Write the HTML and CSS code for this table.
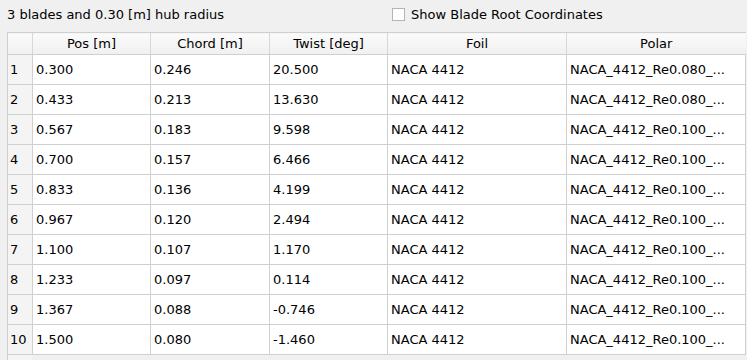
FILE: index.html
```html
<!DOCTYPE html>
<html>
<head>
<meta charset="utf-8">
<link rel="stylesheet" href="styles.css">
</head>
<body>
<div class="top">
  <span class="title">3 blades and 0.30 [m] hub radius</span>
  <label class="check"><span class="box"></span><span>Show Blade Root Coordinates</span></label>
</div>
<div class="table-wrap">
<table class="grid">
  <colgroup>
    <col class="c-rh"><col class="c-num"><col class="c-chord"><col class="c-num"><col class="c-wide"><col class="c-wide">
  </colgroup>
  <thead>
    <tr><th class="corner"></th><th>Pos [m]</th><th>Chord [m]</th><th>Twist [deg]</th><th>Foil</th><th>Polar</th></tr>
  </thead>
  <tbody>
    <tr><th class="rh">1</th><td>0.300</td><td>0.246</td><td>20.500</td><td>NACA 4412</td><td>NACA_4412_Re0.080_...</td></tr>
    <tr><th class="rh">2</th><td>0.433</td><td>0.213</td><td>13.630</td><td>NACA 4412</td><td>NACA_4412_Re0.080_...</td></tr>
    <tr><th class="rh">3</th><td>0.567</td><td>0.183</td><td>9.598</td><td>NACA 4412</td><td>NACA_4412_Re0.100_...</td></tr>
    <tr><th class="rh">4</th><td>0.700</td><td>0.157</td><td>6.466</td><td>NACA 4412</td><td>NACA_4412_Re0.100_...</td></tr>
    <tr><th class="rh">5</th><td>0.833</td><td>0.136</td><td>4.199</td><td>NACA 4412</td><td>NACA_4412_Re0.100_...</td></tr>
    <tr><th class="rh">6</th><td>0.967</td><td>0.120</td><td>2.494</td><td>NACA 4412</td><td>NACA_4412_Re0.100_...</td></tr>
    <tr><th class="rh">7</th><td>1.100</td><td>0.107</td><td>1.170</td><td>NACA 4412</td><td>NACA_4412_Re0.100_...</td></tr>
    <tr><th class="rh">8</th><td>1.233</td><td>0.097</td><td>0.114</td><td>NACA 4412</td><td>NACA_4412_Re0.100_...</td></tr>
    <tr><th class="rh">9</th><td>1.367</td><td>0.088</td><td>-0.746</td><td>NACA 4412</td><td>NACA_4412_Re0.100_...</td></tr>
    <tr><th class="rh">10</th><td>1.500</td><td>0.080</td><td>-1.460</td><td>NACA 4412</td><td>NACA_4412_Re0.100_...</td></tr>
  </tbody>
</table>
<div class="filler"><div class="filler-rh"></div></div>
</div>
</body>
</html>
```
FILE: styles.css
```css
html, body {
  margin: 0;
  padding: 0;
  background: #f0f0f0;
  width: 747px;
  height: 360px;
  overflow: hidden;
}
body {
  font-family: "DejaVu Sans", Verdana, sans-serif;
  font-size: 13px;
  color: #000;
}
.top {
  height: 32px;
  display: flex;
  align-items: center;
  padding-left: 7px;
  box-sizing: border-box;
  padding-bottom: 3px;
}
.title {
  width: 385px;
  flex: none;
}
.check {
  display: flex;
  align-items: center;
  gap: 6px;
}
.box {
  width: 11px;
  height: 11px;
  border: 1px solid #b4b4b4;
  background: #fff;
  display: inline-block;
}
.table-wrap {
  margin-left: 7px;
  width: 738px;
}
.grid {
  border-collapse: collapse;
  table-layout: fixed;
  width: 738px;
  background: #fff;
}
.c-rh { width: 25px; }
.c-num { width: 118px; }
.c-chord { width: 119px; }
.c-wide { width: 179px; }
.grid th, .grid td {
  padding: 0 0 0 3px;
  white-space: nowrap;
  overflow: hidden;
  font-weight: normal;
  text-align: left;
}
.grid thead th {
  height: 21px;
  background: linear-gradient(#fbfbfb, #f0f0f0);
  border-top: 1px solid #cfcfcf;
  border-bottom: 1px solid #d0d0d0;
  border-left: 1px solid #d7d7d7;
  text-align: center;
  padding: 0;
}
.grid thead th.corner {
  border-left: 1px solid #cfcfcf;
}
.grid tbody td {
  height: 29px;
  border: 1px solid #d0d0d0;
  border-top: none;
}
.grid tbody th.rh {
  height: 29px;
  background: #f4f4f4;
  border-left: 1px solid #cfcfcf;
  border-right: 1px solid #d0d0d0;
  border-bottom: 1px solid #d0d0d0;
  padding-left: 2px;
}
.filler {
  height: 6px;
}
.filler-rh {
  width: 24px;
  height: 6px;
  background: #f4f4f4;
  border-left: 1px solid #cfcfcf;
}
```
